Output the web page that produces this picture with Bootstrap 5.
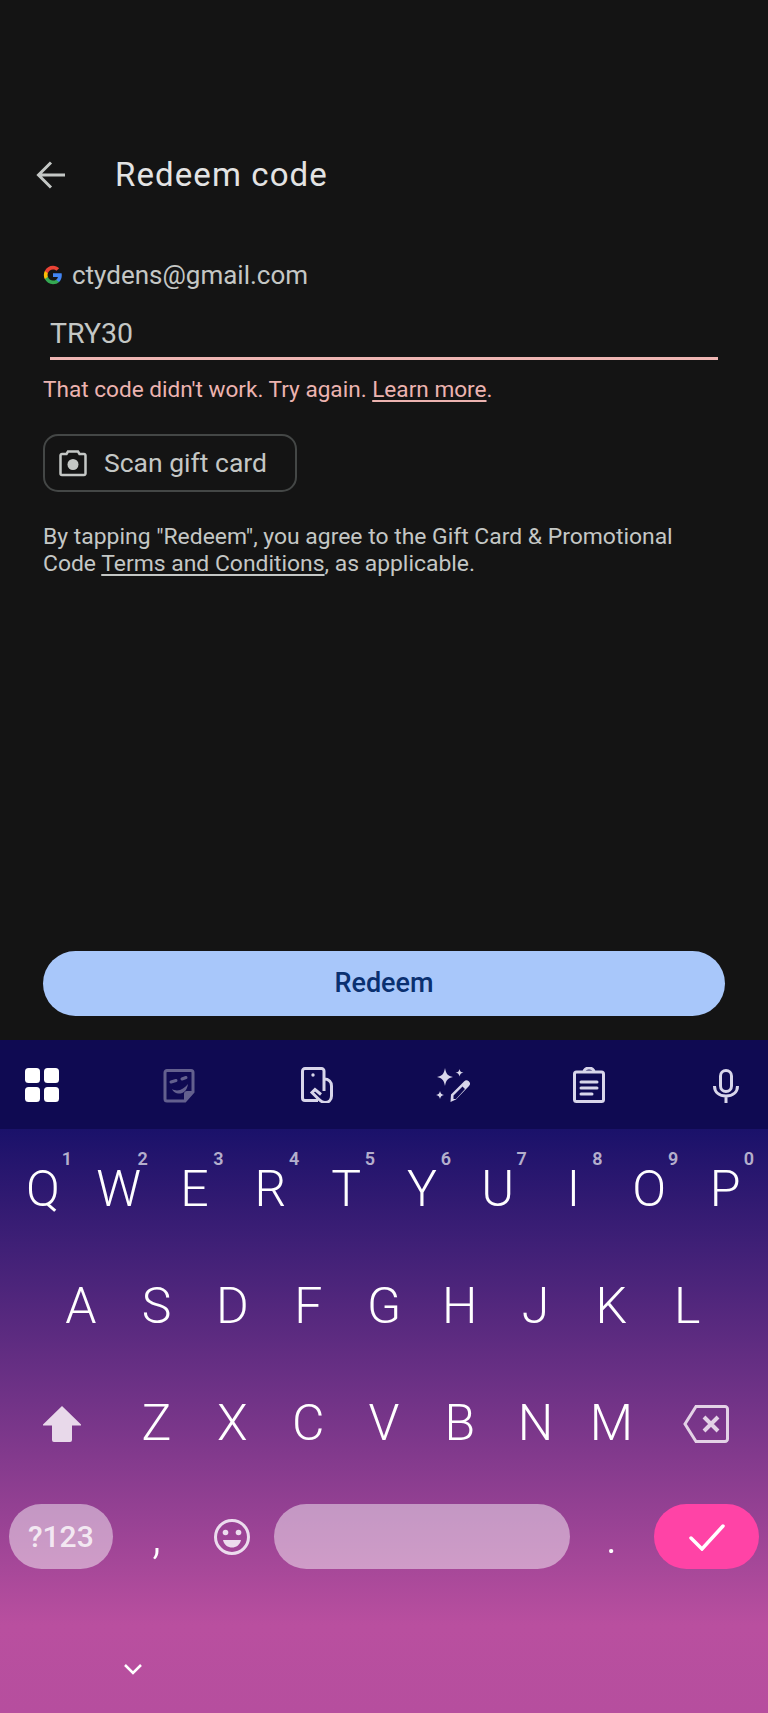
<!DOCTYPE html>
<html lang="en">
<head>
<meta charset="utf-8">
<title>Redeem code</title>
<link href="https://cdn.jsdelivr.net/npm/bootstrap@5.3.0/dist/css/bootstrap.min.css" rel="stylesheet">
<style>
html,body{height:1713px;overflow:hidden}
body{background:#141414;font-family:Roboto,"Liberation Sans",sans-serif;color:#c4c7c5}
.shell{height:1713px}
.redeem-pane{height:1040px;padding-top:155px;padding-left:43px;padding-right:43px}
.titlebar{height:40px;margin-left:-8px}
.titlebar svg{width:32px;height:32px}
.titletext{font-size:33px;font-weight:400;line-height:40px;color:#e3e3e3;margin:0 0 0 48px;letter-spacing:1.100px}
.acct{margin-top:65px;height:30px;font-size:26px;line-height:30px;color:#c4c7c5}
.acct svg{width:20px;height:20px;margin-right:9px}
.codeval{margin:24px 0 0 7px;font-size:28.500px;line-height:40px;height:40px;color:#c4c7c5}
.codeline{height:3px;margin:3px 7px 0 7px;background:#efb6b3}
.errtext{margin:17px 0 0;font-size:22.600px;line-height:26px;color:#ecb3b0}
.errtext a,.termtext a{color:inherit;text-decoration:underline;text-underline-offset:3px}
.scanbtn{width:254px;height:58px;margin-top:31px;border:2px solid #444746;border-radius:15px;background:transparent;color:#c4c7c5;font-size:26.500px;font-weight:400;padding:0 0 0 14px;gap:17px}
.scanbtn svg{width:28px;height:28px}
.termtext{margin:31px 0 0;font-size:22.900px;line-height:27px;color:#c4c7c5}
.redeembtn{height:65px;margin-right:0;background:#a8c7fa;color:#0a3070;border:0;border-radius:33px;font-size:27px;font-weight:500;margin-top:auto;margin-bottom:24px;width:682px}
.imekb{height:673px;background:linear-gradient(180deg,#0f0a52 0,#0f0a52 89px,#1a116a 89px,#b94f9f 585px,#b64e9e 673px)}
.toolstrip{height:89px;padding:0 24px}
.toolstrip svg{width:36px;height:36px;display:block}
.keyrow{height:117px;padding:0 5px}
.keyrow.midrow{padding:0 43px}
.keyrow.first{margin-top:2px}
.keyrow.lastrow{height:109px}
.kcell{flex:1 1 0;position:relative;display:flex;align-items:center;justify-content:center;color:#fff;font-size:50px;font-weight:300;line-height:.7}
.kcell.wide{flex:0 0 113.7px}
.kcell.spacecell{flex:4 1 0}
.hint{position:absolute;top:19px;right:4px;font-size:18px;font-weight:600;line-height:1;color:rgba(255,255,255,.68);width:20px;text-align:center}
.kcell svg{display:block}
.pillk{height:65px;margin:0 4px;border-radius:33px;background:rgba(255,255,255,.46);flex:1 1 auto;display:flex;align-items:center;justify-content:center;font-size:30px;font-weight:500;line-height:1;color:rgba(255,255,255,.8)}
.pillk.symk{margin-right:6px}
.pillk.go{background:#ff43a6;margin-left:5px}
.kbfoot{padding:66px 0 0 121px}
.kbfoot svg{display:block;width:24px;height:24px}
</style>
</head>
<body>
<div class="shell d-flex flex-column">
  <main class="redeem-pane d-flex flex-column">
    <div class="titlebar d-flex align-items-center">
      <svg viewBox="0 0 32 32" fill="none" stroke="#c4c7c5" stroke-width="3"><path d="M30 16H4M16 3.500 3.500 16 16 28.500"/></svg>
      <h1 class="titletext">Redeem code</h1>
    </div>
    <div class="acct d-flex align-items-center">
      <svg viewBox="0 0 24 24"><path fill="#4285F4" d="M22.56 12.25c0-.78-.07-1.53-.2-2.25H12v4.26h5.92c-.26 1.37-1.04 2.53-2.21 3.31v2.77h3.57c2.08-1.92 3.28-4.74 3.28-8.09z"/><path fill="#34A853" d="M12 23c2.97 0 5.46-.98 7.28-2.66l-3.57-2.77c-.98.66-2.23 1.06-3.71 1.06-2.86 0-5.29-1.93-6.16-4.53H2.18v2.84C3.99 20.53 7.7 23 12 23z"/><path fill="#FBBC05" d="M5.84 14.09c-.22-.66-.35-1.36-.35-2.09s.13-1.43.35-2.09V7.07H2.18C1.43 8.55 1 10.22 1 12s.43 3.45 1.18 4.93l2.85-2.22.81-.62z"/><path fill="#EA4335" d="M12 5.38c1.62 0 3.06.56 4.21 1.64l3.15-3.15C17.45 2.09 14.97 1 12 1 7.7 1 3.99 3.47 2.18 7.07l3.66 2.84c.87-2.6 3.3-4.53 6.16-4.53z"/></svg>
      <span>ctydens@gmail.com</span>
    </div>
    <div class="codeval">TRY30</div>
    <div class="codeline"></div>
    <p class="errtext">That code didn't work. Try again. <a href="#">Learn more</a>.</p>
    <button type="button" class="btn scanbtn d-flex align-items-center">
      <svg viewBox="0 0 28 28" fill="none"><path d="M9 2.500h10l1.500 2.500H25a1.500 1.500 0 0 1 1.500 1.500v18a1.500 1.500 0 0 1-1.500 1.500H3a1.500 1.500 0 0 1-1.500-1.500v-18A1.500 1.500 0 0 1 3 5h4.500z" stroke="#c4c7c5" stroke-width="2.500"/><circle cx="14" cy="15.500" r="5.500" fill="#c4c7c5"/></svg>
      <span>Scan gift card</span>
    </button>
    <p class="termtext">By tapping "Redeem", you agree to the Gift Card &amp; Promotional<br>Code <a href="#">Terms and Conditions</a>, as applicable.</p>
    <button type="button" class="btn redeembtn">Redeem</button>
  </main>
  <section class="imekb">
    <div class="toolstrip d-flex align-items-center justify-content-between">
      <svg viewBox="0 0 36 36" fill="#fff"><rect x="1" y="1" width="15" height="15" rx="3.500"/><rect x="20" y="1" width="15" height="15" rx="3.500"/><rect x="1" y="20" width="15" height="15" rx="3.500"/><rect x="20" y="20" width="15" height="15" rx="3.500"/></svg>
      <svg viewBox="0 0 36 36" fill="none" opacity=".35"><path d="M6 3.500h24a2 2 0 0 1 2 2V25l-8 9H6a2 2 0 0 1-2-2V5.500a2 2 0 0 1 2-2z" stroke="#fff" stroke-width="3"/><path d="M33 24h-7a3 3 0 0 0-3 3v8z" fill="#fff"/><path d="M10 15l5-1.500M21 12l4-1.500" stroke="#fff" stroke-width="3" stroke-linecap="round"/><path d="M11 22c6 3.500 12 0 16-5-1 7-5 10-10 9.500-3-.3-5-2-6-4.500z" fill="#fff"/></svg>
      <svg viewBox="0 0 36 36" fill="none" stroke="#d8d6ea" stroke-width="3"><path d="M26 24V4a2.500 2.500 0 0 0-2.500-2.500H7A2.500 2.500 0 0 0 4.500 4v27A2.500 2.500 0 0 0 7 33.500h13"/><circle cx="15" cy="8" r="1.700" fill="#d8d6ea" stroke="none"/><path d="M26 12c5 0 7.500 3 7.500 7v10c0 4-3 6.500-6.500 6.500-3 0-5-2-7-4l-6-6 3-3 6 5"/></svg>
      <svg viewBox="0 0 36 36" fill="#d8d6ea"><path d="M11 1c1 6 3 8 8 9-5 1-7 3-8 9-1-6-3-8-8-9 5-1 7-3 8-9zM25.500 2c.5 2.500 1.500 3.500 4 3.500-2.500.5-3.500 1.500-4 4-.5-2.500-1.500-3.500-4-4 2.500 0 3.500-1 4-3.500zM6 24c.5 2.500 1.500 3.500 4 4-2.500.5-3.500 1.500-4 4-.5-2.500-1.500-3.500-4-4 2.500-.5 3.500-1.500 4-4z"/><path d="M16.500 35l.5-7.500L30 14.500a3.200 3.200 0 0 1 5 4.500L22 32.500zM19.500 28.500v3.500h2.500L31 22l-2.500-2.500z" fill-rule="evenodd"/></svg>
      <svg viewBox="0 0 36 36" fill="none" stroke="#d8d6ea" stroke-width="3"><rect x="3.500" y="5" width="29" height="29.500" rx="2"/><path d="M13 5a5 4 0 0 1 10 0" /><path d="M10 15h16M10 21h16M10 27h11" stroke-linecap="round"/></svg>
      <svg viewBox="0 0 36 36" fill="none" stroke="#d8d6ea" stroke-width="3"><rect x="12.500" y="3.500" width="11" height="21" rx="5.500"/><path d="M6.500 19c0 6.500 5 10 11.500 10s11.500-3.500 11.500-10M18 29v7"/></svg>
    </div>
    <div class="keyrow first d-flex">
      <div class="kcell">Q<span class="hint">1</span></div><div class="kcell">W<span class="hint">2</span></div><div class="kcell">E<span class="hint">3</span></div><div class="kcell">R<span class="hint">4</span></div><div class="kcell">T<span class="hint">5</span></div><div class="kcell">Y<span class="hint">6</span></div><div class="kcell">U<span class="hint">7</span></div><div class="kcell">I<span class="hint">8</span></div><div class="kcell">O<span class="hint">9</span></div><div class="kcell">P<span class="hint">0</span></div>
    </div>
    <div class="keyrow midrow d-flex">
      <div class="kcell">A</div><div class="kcell">S</div><div class="kcell">D</div><div class="kcell">F</div><div class="kcell">G</div><div class="kcell">H</div><div class="kcell">J</div><div class="kcell">K</div><div class="kcell">L</div>
    </div>
    <div class="keyrow d-flex">
      <div class="kcell wide"><svg width="38" height="36" viewBox="0 0 38 36" fill="#e8d9ea"><path d="M19 0 38 18.500a.6.6 0 0 1-.4 1H29V34a2 2 0 0 1-2 2H11a2 2 0 0 1-2-2V19.500H.4a.6.6 0 0 1-.4-1z"/></svg></div>
      <div class="kcell">Z</div><div class="kcell">X</div><div class="kcell">C</div><div class="kcell">V</div><div class="kcell">B</div><div class="kcell">N</div><div class="kcell">M</div>
      <div class="kcell wide"><svg width="46" height="38" viewBox="0 0 46 38" fill="none" stroke="#e3d2e6" stroke-width="3"><path d="M13 1.500h29a2.500 2.500 0 0 1 2.500 2.500v30a2.500 2.500 0 0 1-2.500 2.500H13L2 19z"/><path d="M21 12l14 14M35 12 21 26" stroke-width="4"/></svg></div>
    </div>
    <div class="keyrow lastrow d-flex">
      <div class="kcell wide"><div class="pillk symk">?123</div></div>
      <div class="kcell">,</div>
      <div class="kcell"><svg width="36" height="36" viewBox="0 0 36 36" fill="none"><circle cx="18" cy="18" r="16.500" stroke="#ecdcee" stroke-width="3"/><circle cx="11.500" cy="13.500" r="2.800" fill="#ecdcee"/><circle cx="24.500" cy="13.500" r="2.800" fill="#ecdcee"/><path d="M9 21h18c-1 5-5 7.500-9 7.500S10 26 9 21z" fill="#ecdcee"/></svg></div>
      <div class="kcell spacecell"><div class="pillk"></div></div>
      <div class="kcell">.</div>
      <div class="kcell wide"><div class="pillk go"><svg width="36" height="28" viewBox="0 0 36 28" fill="none" stroke="#fff" stroke-width="3.500" stroke-linecap="round"><path d="M2 15l11 11L34 3"/></svg></div></div>
    </div>
    <div class="kbfoot"><svg viewBox="0 0 24 24" fill="none" stroke="#fff" stroke-width="2.500"><path d="M4 8l8 8 8-8"/></svg></div>
  </section>
</div>
<script src="https://cdn.jsdelivr.net/npm/bootstrap@5.3.0/dist/js/bootstrap.bundle.min.js"></script>
</body>
</html>
